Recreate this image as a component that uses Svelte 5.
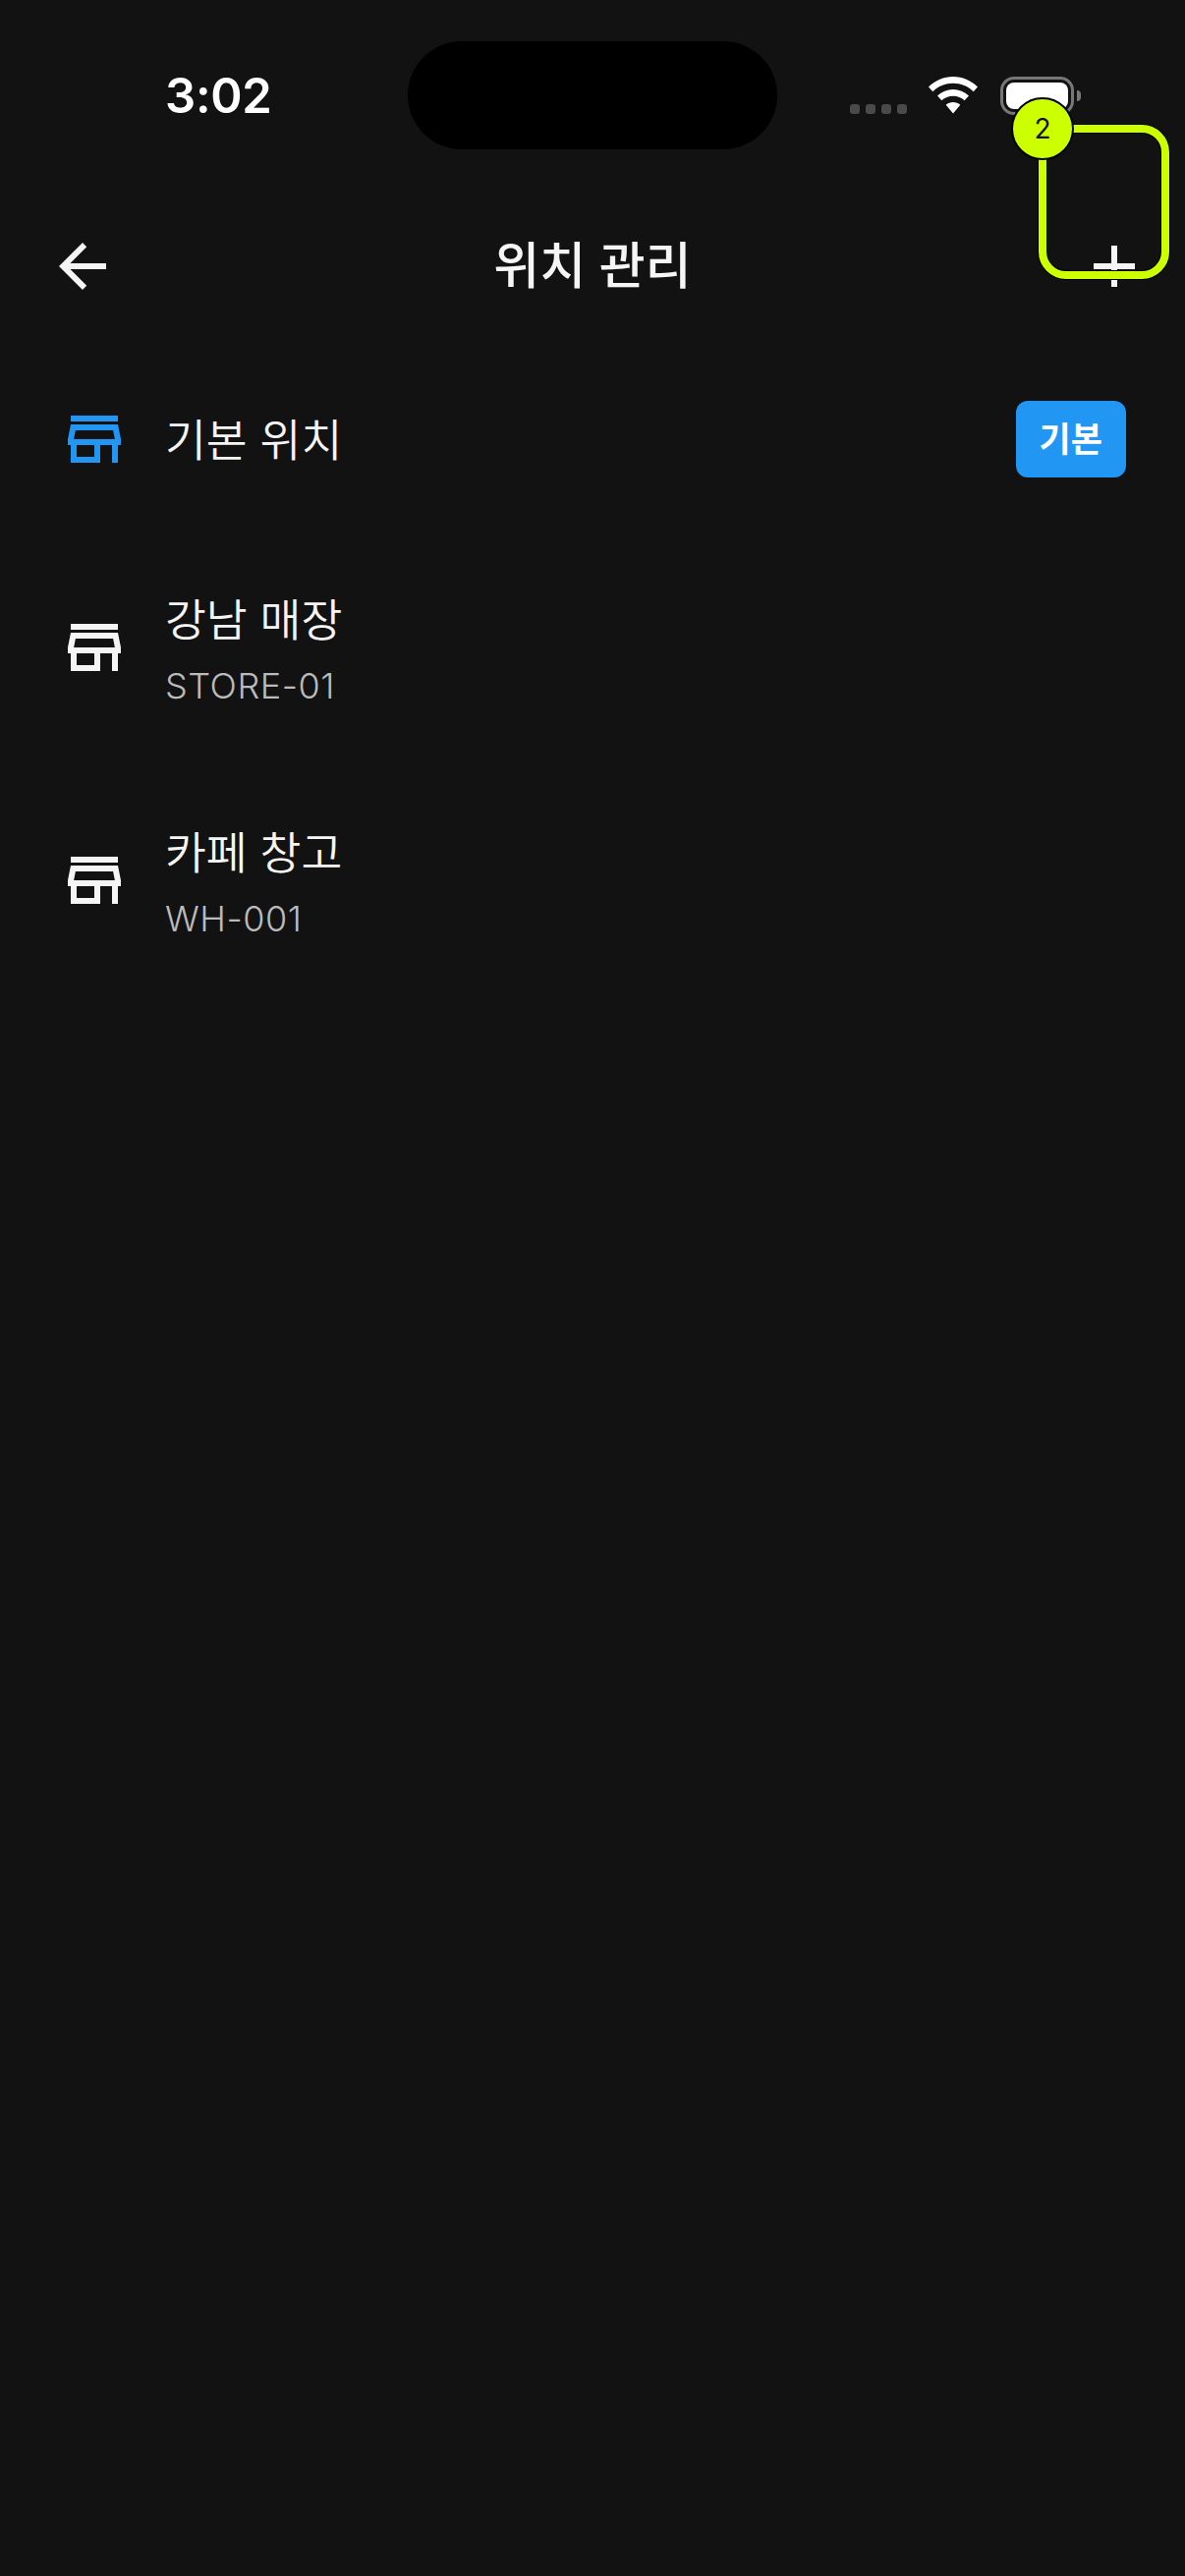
<script>
  const locations = [
    { name: "기본 위치", isDefault: true },
    { name: "강남 매장", code: "STORE-01" },
    { name: "카페 창고", code: "WH-001" }
  ];
  const storePath = "M20 4H4v2h16V4zm1 10v-2l-1-5H4l-1 5v2h1v6h10v-6h4v6h2v-6h1zm-9 4H6v-4h6v4zm-6.96-6l.6-3h12.72l.6 3H5.04z";
</script>

<main class="screen">
  <div class="status">
    <span class="time">3:02</span>
    <div class="island"></div>
    <div class="dots"><i></i><i></i><i></i><i></i></div>
    <svg class="wifi" viewBox="0 0 50 38" width="50" height="38">
      <path d="M25 0C15.500 0 7 3.700 0 10.500L4.300 15.200C10 9.700 17 6.800 25 6.800S40 9.700 45.700 15.200L50 10.500C43 3.700 34.500 0 25 0Z" fill="#fff"/>
      <path d="M25 13C19 13 13.500 15.300 9 19.500L13.400 24.300C16.600 21.300 20.500 19.700 25 19.700S33.400 21.300 36.600 24.300L41 19.500C36.500 15.300 31 13 25 13Z" fill="#fff"/>
      <path d="M25 26C22.400 26 19.800 26.900 17.700 28.700L25 37.500L32.300 28.700C30.200 26.900 27.600 26 25 26Z" fill="#fff"/>
    </svg>
    <div class="battery"><div class="fill"></div></div>
    <div class="cap"></div>
  </div>

  <header class="bar">
    <svg class="icon" viewBox="0 0 24 24"><path d="M20 11H7.830l5.590-5.590L12 4l-8 8 8 8 1.410-1.410L7.830 13H20v-2z"/></svg>
    <h1>위치 관리</h1>
    <svg class="icon add" viewBox="0 0 24 24"><path d="M19 13h-6v6h-2v-6H5v-2h6V5h2v6h6v2z"/></svg>
  </header>

  <ul class="list">
    {#each locations as loc}
      <li class="row">
        <svg class="icon" class:blue={loc.isDefault} viewBox="0 0 24 24"><path d={storePath}/></svg>
        <div class="info">
          <div class="name">{loc.name}</div>
          {#if loc.code}<div class="code">{loc.code}</div>{/if}
        </div>
        {#if loc.isDefault}<span class="badge">기본</span>{/if}
      </li>
    {/each}
  </ul>

  <div class="highlight"></div>
  <div class="marker">2</div>
</main>

<style>
  :global(body) {
    margin: 0;
    background: #121212;
  }
  .screen {
    position: relative;
    width: 1206px;
    height: 2622px;
    overflow: hidden;
    background: #121212;
    color: #f5f5f5;
    font-family: Inter, "Noto Sans CJK KR", sans-serif;
  }
  .status {
    display: flex;
    align-items: center;
    height: 110px;
    padding: 42px 0 35px 168px;
  }
  .time {
    width: 247px;
    font-size: 49px;
    font-weight: 600;
    letter-spacing: -0.300px;
    color: #fff;
  }
  .island {
    width: 376px;
    height: 110px;
    border-radius: 55px;
    background: #000;
  }
  .dots {
    display: flex;
    gap: 6px;
    margin: 28px 0 0 74px;
  }
  .dots i {
    width: 10px;
    height: 10px;
    border-radius: 3px;
    background: #4a4a4a;
  }
  .wifi {
    margin-left: 22px;
  }
  .battery {
    box-sizing: border-box;
    width: 75px;
    height: 39px;
    margin-left: 23px;
    padding: 3px;
    border: 3px solid #777;
    border-radius: 14px;
  }
  .fill {
    height: 100%;
    border-radius: 8px;
    background: #fff;
  }
  .cap {
    width: 4px;
    height: 11px;
    margin-left: 3px;
    border-radius: 0 4px 4px 0;
    background: #777;
  }
  .bar {
    display: grid;
    grid-template-columns: 1fr auto 1fr;
    align-items: center;
    height: 167px;
    padding: 0 36px 0 48px;
  }
  h1 {
    margin: 0 0 0 -12px;
    font-size: 51px;
    font-weight: 500;
    line-height: 1.4;
  }
  .icon {
    flex: none;
    width: 72px;
    height: 72px;
    fill: #f5f5f5;
  }
  .add {
    justify-self: end;
  }
  .icon.blue {
    fill: #2196f3;
  }
  .list {
    margin: 0;
    padding: 0;
    list-style: none;
  }
  .row {
    display: flex;
    align-items: center;
    gap: 36px;
    padding: 54px 60px;
  }
  .info {
    flex: 1;
  }
  .name {
    padding-top: 2px;
    font-size: 45.500px;
    font-weight: 350;
    line-height: 71px;
  }
  .code {
    margin-top: 6px;
    font-size: 36px;
    font-weight: 300;
    line-height: 50px;
    letter-spacing: 0.500px;
    color: #bbb;
  }
  .badge {
    padding: 0 24px;
    font-size: 35px;
    font-weight: 700;
    line-height: 78px;
    color: #fff;
    background: #2196f3;
    border-radius: 12px;
  }
  .highlight {
    position: absolute;
    left: 1057px;
    top: 127px;
    box-sizing: border-box;
    width: 133px;
    height: 157px;
    border: 8px solid #ccff00;
    border-radius: 28px;
    box-shadow: 0 0 0 1px #000, inset 0 0 0 1px #000;
  }
  .marker {
    position: absolute;
    left: 1029px;
    top: 99px;
    box-sizing: border-box;
    width: 64px;
    height: 64px;
    border: 2px solid #000;
    border-radius: 50%;
    background: #ccff00;
    color: #111;
    font-size: 28px;
    line-height: 60px;
    text-align: center;
  }
</style>
